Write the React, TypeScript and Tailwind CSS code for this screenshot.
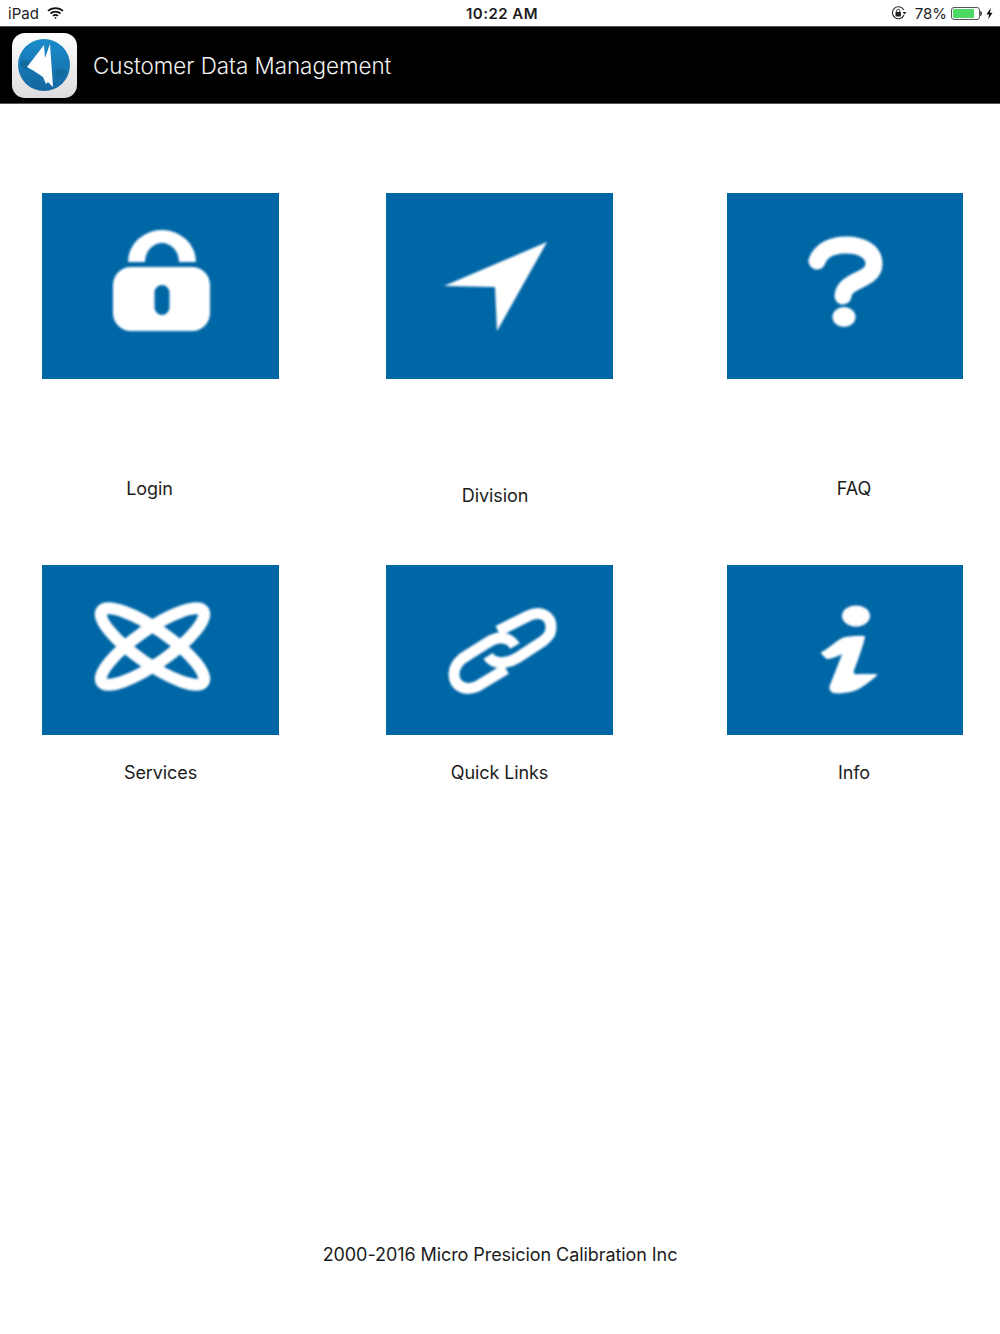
const font = 'font-["Inter","Liberation_Sans",sans-serif]';

function LockIcon() {
  return (
    <svg viewBox="42 193 237 186" className="block h-full w-full blur-[1px]">
      <path d="M128 262 A34 32 0 0 1 196 262 H179 A17 19 0 0 0 145 262 Z" fill="#fff" />
      <path
        fillRule="evenodd"
        fill="#fff"
        d="M131 267 H192 A18 18 0 0 1 210 285 V313 A18 18 0 0 1 192 331 H131 A18 18 0 0 1 113 313 V285 A18 18 0 0 1 131 267 Z M162 285 A7.500 7.500 0 0 0 154.500 292.500 V307.500 A7.500 7.500 0 0 0 169.500 307.500 V292.500 A7.500 7.500 0 0 0 162 285 Z"
      />
    </svg>
  );
}

function ArrowIcon() {
  return (
    <svg viewBox="386 193 227 186" className="block h-full w-full blur-[0.8px]">
      <path d="M547 242 L444 286 L495 287 L497 331 Z" fill="#fff" />
    </svg>
  );
}

function QuestionIcon() {
  return (
    <svg viewBox="727 193 236 186" className="block h-full w-full blur-[1px]">
      <path
        d="M817 261 C821 250 833 245 846 245 C861 245 874 251 874 264 C874 281 844 279 843 296"
        fill="none"
        stroke="#fff"
        strokeWidth="17"
        strokeLinecap="round"
      />
      <ellipse cx="844" cy="317" rx="11.500" ry="10" fill="#fff" />
    </svg>
  );
}

function ServicesIcon() {
  return (
    <svg viewBox="42 565 237 170" className="block h-full w-full blur-[1px]">
      <g fill="none" stroke="#fff" strokeWidth="12">
        <ellipse cx="152.500" cy="646.500" rx="62" ry="17" transform="rotate(35 152.500 646.500)" />
        <ellipse cx="152.500" cy="646.500" rx="62" ry="17" transform="rotate(-35 152.500 646.500)" />
      </g>
    </svg>
  );
}

function LinkIcon() {
  return (
    <svg viewBox="386 565 227 170" className="block h-full w-full blur-[1px]">
      <g fill="none" stroke="#fff" strokeWidth="11" strokeLinecap="butt">
        <path d="M498 631 L528 616 C541 610 551 616 551 627 C551 634 548 637 543 641 L517 658 C507 664 494 665 488 656" />
        <path d="M506 669 L478 686 C465 692 454 686 454 674 C454 667 458 662 463 658 L487 643 C497 636 509 636 515 646" />
      </g>
    </svg>
  );
}

function InfoIcon() {
  return (
    <svg viewBox="727 565 236 170" className="block h-full w-full blur-[1px]">
      <ellipse cx="856" cy="616" rx="14" ry="10.500" fill="#fff" />
      <path
        d="M822 653 C830 649 838 640 845 638 C852 637 859 636 864 637 C861 650 856 662 853 670 C852 675 855 676 859 675 L876 675 C868 682 858 690 850 691 C845 692 838 693 834 692 C830 691 830 688 831 685 L844 652 C838 655 832 658 827 658 Z"
        fill="#fff"
        stroke="#fff"
        strokeWidth="2"
        strokeLinejoin="round"
      />
    </svg>
  );
}

function AppLogo() {
  return (
    <svg viewBox="12 33 65 65" className="block h-[65px] w-[65px]">
      <defs>
        <linearGradient id="logoBg" x1="0" y1="0" x2="0" y2="1">
          <stop offset="0" stopColor="#ffffff" />
          <stop offset="1" stopColor="#dcdcdc" />
        </linearGradient>
        <linearGradient id="globe" x1="0" y1="0" x2="0" y2="1">
          <stop offset="0" stopColor="#1b8ccb" />
          <stop offset="1" stopColor="#14679f" />
        </linearGradient>
      </defs>
      <rect x="12" y="33" width="65" height="65" rx="13" fill="url(#logoBg)" />
      <circle cx="44" cy="65" r="26" fill="url(#globe)" />
      <path d="M20 62 C27 58 32 62 29 67 C26 71 21 69 20 62 Z" fill="#126a9f" />
      <path d="M55 72 C60 68 67 69 67 73 C63 79 58 80 55 72 Z" fill="#126a9f" />
      <path d="M33 80 C38 79 42 83 42 89 C37 90 33 86 33 80 Z" fill="#126a9f" />
      <path
        d="M27 67 L44 45 L45 58 L50 44 L53 87 L48 82 L46 84 L43 77 L37 73 L34 71 Z"
        fill="#fff"
      />
    </svg>
  );
}

function StatusBar() {
  return (
    <div className="flex h-[26px] items-center bg-white pl-2 pr-[7px] text-[15px] text-[#1c1c1c]">
      <div className="flex flex-1 items-center gap-2">
        <span className="mt-[2px]">iPad</span>
        <svg viewBox="0 0 17 12" className="h-3 w-[17px]" fill="none" stroke="#111" strokeWidth="1.700">
          <path d="M1 4 A11 11 0 0 1 16 4" />
          <path d="M3.500 6.500 A7.500 7.500 0 0 1 13.500 6.500" />
          <path d="M6 9 A3.500 3.500 0 0 1 11 9" />
          <circle cx="8.500" cy="10.800" r="0.900" fill="#111" stroke="none" />
        </svg>
      </div>
      <span className="ml-[3px] mt-[2px] font-semibold tracking-[0.03em]">10:22 AM</span>
      <div className="flex flex-1 items-center justify-end">
        <svg viewBox="0 0 16 14" className="mr-[8px] h-[14px] w-4" fill="none">
          <path d="M12.800 4 A6 6 0 1 0 13 9" stroke="#222" strokeWidth="1.100" />
          <path d="M11.500 6 L15.500 6 L13.500 8.500 Z" fill="#222" />
          <rect x="4.500" y="6" width="5.500" height="4.500" rx="0.600" fill="#222" />
          <path d="M5.700 6 V4.800 A1.500 1.500 0 0 1 8.800 4.800 V6" stroke="#222" strokeWidth="0.900" />
        </svg>
        <span className="mt-[2px]">78%</span>
        <div className="ml-[4px] flex h-[13px] w-[29px] items-center rounded-[3px] border border-[#555] p-[1px]">
          <div className="h-full w-[21px] rounded-[1px] bg-[#4cd964]" />
        </div>
        <div className="h-[5px] w-[2px] rounded-r-sm bg-[#555]" />
        <svg viewBox="0 0 8 13" className="ml-[4px] h-[13px] w-[7px]">
          <path d="M5.500 0 L0.500 7.500 H3.500 L2.500 13 L7.500 5.500 H4.500 Z" fill="#111" />
        </svg>
      </div>
    </div>
  );
}

function Tile({ height, children }: { height: string; children: React.ReactNode }) {
  return <div className={`overflow-hidden bg-[#0067a7] ${height}`}>{children}</div>;
}

export default function App() {
  return (
    <div className={`flex h-[1334px] w-[1000px] flex-col bg-white ${font}`}>
      <StatusBar />
      <div className="flex h-[78px] items-center border-y border-[#555] bg-black pl-3">
        <AppLogo />
        <span className="ml-4 mt-[2px] text-[22.400px] font-light text-[#f2f2f2]">Customer Data Management</span>
      </div>

      <div className="grid grid-cols-[344px_341px_236px] pl-[42px] pt-[89px] text-[18px] leading-6 tracking-[-0.005em] text-[#1c1c1c]">
        <div>
          <Tile height="h-[186px] w-[237px]"><LockIcon /></Tile>
          <p className="mt-[98px] w-[237px] pr-[22px] text-center">Login</p>
        </div>
        <div>
          <Tile height="h-[186px] w-[227px]"><ArrowIcon /></Tile>
          <p className="mt-[105px] w-[227px] pr-[9px] text-center">Division</p>
        </div>
        <div>
          <Tile height="h-[186px] w-[236px]"><QuestionIcon /></Tile>
          <p className="mt-[98px] w-[236px] pl-[18px] text-center">FAQ</p>
        </div>

        <div className="mt-[57px]">
          <Tile height="h-[170px] w-[237px]"><ServicesIcon /></Tile>
          <p className="mt-[26px] w-[237px] text-center">Services</p>
        </div>
        <div className="mt-[57px]">
          <Tile height="h-[170px] w-[227px]"><LinkIcon /></Tile>
          <p className="mt-[26px] w-[227px] text-center">Quick Links</p>
        </div>
        <div className="mt-[57px]">
          <Tile height="h-[170px] w-[236px]"><InfoIcon /></Tile>
          <p className="mt-[26px] w-[236px] pl-[18px] text-center">Info</p>
        </div>
      </div>

      <p className="mt-[458px] text-center text-[18px] leading-6 tracking-[-0.004em] text-[#1c1c1c]">
        2000-2016 Micro Presicion Calibration Inc
      </p>
    </div>
  );
}
